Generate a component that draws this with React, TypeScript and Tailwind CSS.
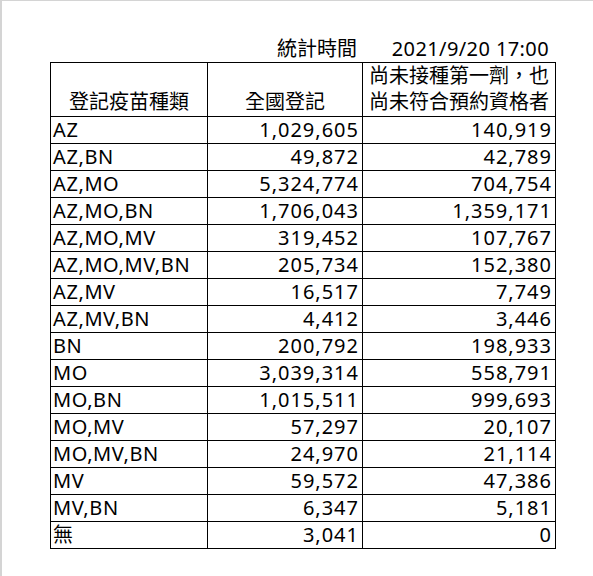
import React from "react";

const rows: [string, string, string][] = [
  ["AZ", "1,029,605", "140,919"],
  ["AZ,BN", "49,872", "42,789"],
  ["AZ,MO", "5,324,774", "704,754"],
  ["AZ,MO,BN", "1,706,043", "1,359,171"],
  ["AZ,MO,MV", "319,452", "107,767"],
  ["AZ,MO,MV,BN", "205,734", "152,380"],
  ["AZ,MV", "16,517", "7,749"],
  ["AZ,MV,BN", "4,412", "3,446"],
  ["BN", "200,792", "198,933"],
  ["MO", "3,039,314", "558,791"],
  ["MO,BN", "1,015,511", "999,693"],
  ["MO,MV", "57,297", "20,107"],
  ["MO,MV,BN", "24,970", "21,114"],
  ["MV", "59,572", "47,386"],
  ["MV,BN", "6,347", "5,181"],
  ["無", "3,041", "0"],
];

export default function App() {
  return (
    <div
      className="h-[576px] w-[593px] bg-white border-t border-l-2 border-[#d4d4d4] text-black text-[20px]"
      style={{ fontFamily: '"Noto Sans", "Noto Sans CJK TC", sans-serif' }}
    >
      <div className="pl-[48px] pt-[34px]">
        {/* title row */}
        <div className="grid grid-cols-[157px_155px_193px] h-[27px] leading-[27px]">
          <div />
          <div className="text-right pr-[5px]">統計時間</div>
          <div className="text-right pr-[6px] tracking-[0.4px]">2021/9/20 17:00</div>
        </div>

        <table className="table-fixed border-collapse w-[505px]">
          <colgroup>
            <col className="w-[157px]" />
            <col className="w-[155px]" />
            <col className="w-[193px]" />
          </colgroup>
          <thead>
            <tr className="h-[54px]">
              <th className="border border-black font-normal align-bottom text-center leading-[27px] pb-[1px]">
                登記疫苗種類
              </th>
              <th className="border border-black font-normal align-bottom text-center leading-[27px] pb-[1px]">
                全國登記
              </th>
              <th className="border border-black font-normal align-bottom text-center leading-[26px] pb-[1px]">
                尚未接種第一劑，也
                <br />
                尚未符合預約資格者
              </th>
            </tr>
          </thead>
          <tbody>
            {rows.map(([name, total, pending]) => (
              <tr key={name} className="h-[27px]">
                <td className="border border-black align-bottom leading-[26px] pl-[2px] tracking-[0.6px]">{name}</td>
                <td className="border border-black align-bottom leading-[26px] text-right pr-[3px] tracking-[1px]">{total}</td>
                <td className="border border-black align-bottom leading-[26px] text-right pr-[3px] tracking-[1px]">{pending}</td>
              </tr>
            ))}
          </tbody>
        </table>
      </div>
    </div>
  );
}
